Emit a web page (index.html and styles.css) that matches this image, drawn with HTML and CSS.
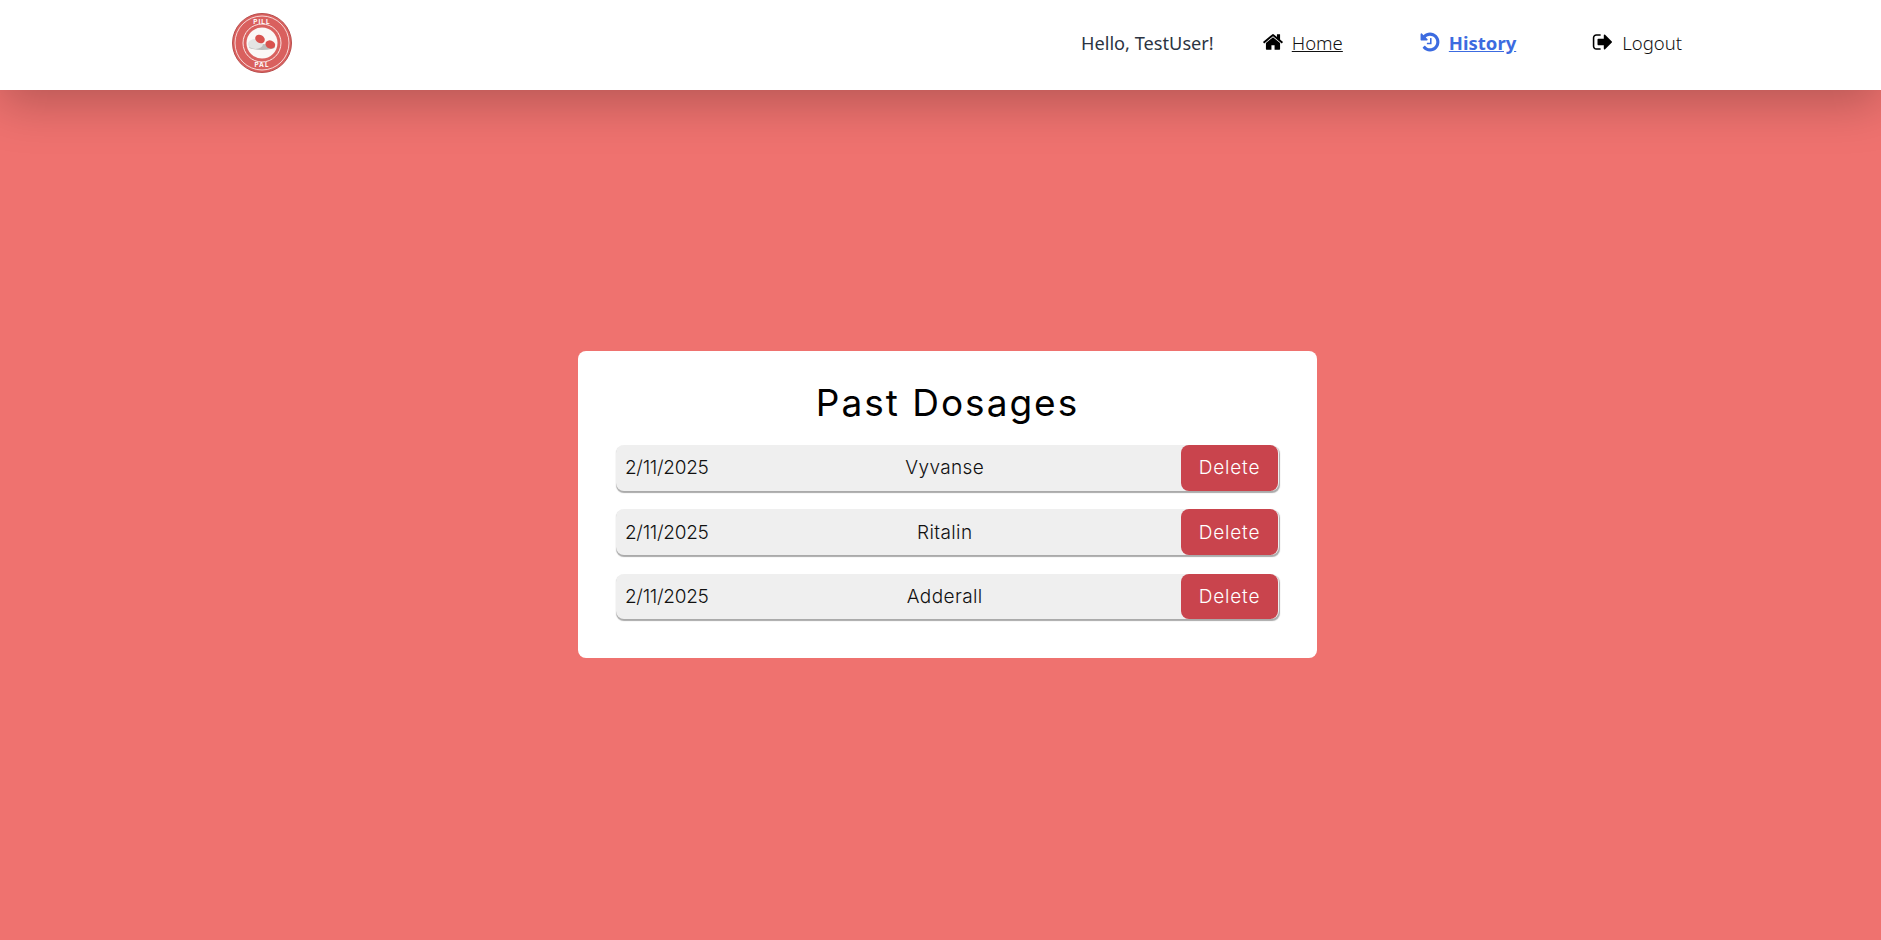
FILE: index.html
```html
<!DOCTYPE html>
<html lang="en">
<head>
    <meta charset="UTF-8">
    <meta name="viewport" content="width=device-width, initial-scale=1.0">
    <title>Pill Pal - History</title>
    <link rel="stylesheet" href="styles.css">
</head>
<body>
    <nav class="navbar">
        <a href="#" class="logo">
            <svg width="62" height="62" viewBox="0 0 62 62">
                <circle cx="31" cy="31" r="29.500" fill="#d9605e" stroke="#b84e4d" stroke-width="1"/>
                <circle cx="31" cy="31" r="27" fill="none" stroke="#fbe6e5" stroke-width="0.900"/>
                <circle cx="31" cy="31" r="19" fill="none" stroke="#fbe6e5" stroke-width="1"/>
                <circle cx="31" cy="31" r="15.500" fill="#fbf7f6"/>
                <text x="31" y="11.500" class="logo-text">PILL</text>
                <text x="31" y="55.300" class="logo-text">PAL</text>
                <ellipse cx="31" cy="35" rx="13" ry="3" fill="#bdbdbd"/>
                <ellipse cx="24.500" cy="32" rx="7.500" ry="5" fill="#e4e4e4"/>
                <ellipse cx="29" cy="27" rx="5" ry="4" fill="#d9524f" transform="rotate(30 29 27)"/>
                <ellipse cx="39.300" cy="32.500" rx="5" ry="4" fill="#d9524f" transform="rotate(20 39.300 32.500)"/>
            </svg>
        </a>
        <ul class="nav-links">
            <li class="greeting">Hello, TestUser!</li>
            <li class="nav-item home">
                <svg class="icon" viewBox="0 0 1792 1792"><path d="M1472 992v480q0 26-19 45t-45 19h-384v-384h-256v384h-384q-26 0-45-19t-19-45v-480q0-1 .5-3t.5-3l575-474 575 474q1 2 1 6zm223-69l-62 74q-8 9-21 11h-3q-13 0-21-7l-692-577-692 577q-12 8-24 7-13-2-21-11l-62-74q-8-10-7-23.500t11-21.500l719-599q32-26 76-26t76 26l244 204v-195q0-14 9-23t23-9h192q14 0 23 9t9 23v408l219 182q10 8 11 21.500t-7 23.500z"/></svg>
                <a href="#">Home</a>
            </li>
            <li class="nav-item active">
                <svg class="icon" viewBox="0 0 1792 1792"><path d="M1664 896q0 156-61 298t-164 245-245 164-298 61q-172 0-327-72.500t-264-204.500q-7-10-6.500-22.500t8.500-20.500l137-138q10-9 25-9 16 2 23 12 73 95 179 147t225 52q104 0 198.500-40.500t163.500-109.500 109.500-163.500 40.500-198.500-40.500-198.500-109.500-163.500-163.500-109.500-198.500-40.500q-98 0-188 35.500t-160 101.500l137 138q31 30 14 69-17 40-59 40h-448q-26 0-45-19t-19-45v-448q0-42 40-59 39-17 69 14l130 129q107-101 244.500-156.500t284.500-55.500q156 0 298 61t245 164 164 245 61 298zm-640-288v448q0 14-9 23t-23 9h-320q-14 0-23-9t-9-23v-64q0-14 9-23t23-9h224v-352q0-14 9-23t23-9h64q14 0 23 9t9 23z"/></svg>
                <a href="#">History</a>
            </li>
            <li class="nav-item logout">
                <svg class="icon" viewBox="0 0 1792 1792"><path d="M704 1440q0 4 1 20t.5 26.500-3 23.500-10 19.500-20.500 6.500h-320q-119 0-203.500-84.500t-84.500-203.500v-704q0-119 84.500-203.500t203.500-84.500h320q13 0 22.500 9.500t9.500 22.500q0 4 1 20t.5 26.500-3 23.500-10 19.500-20.500 6.500h-320q-66 0-113 47t-47 113v704q0 66 47 113t113 47h312l11.500 1 11.500 3 8 5.500 7 9 2 13.500zm928-544q0 26-19 45l-544 544q-19 19-45 19t-45-19-19-45v-288h-448q-26 0-45-19t-19-45v-384q0-26 19-45t45-19h448v-288q0-26 19-45t45-19 45 19l544 544q19 19 19 45z"/></svg>
                <a href="#">Logout</a>
            </li>
        </ul>
    </nav>

    <main class="content">
        <section class="card">
            <h1>Past Dosages</h1>
            <div class="dose-list">
                <div class="dose">
                    <span class="dose-date">2/11/2025</span>
                    <span class="dose-name">Vyvanse</span>
                    <button class="delete-btn">Delete</button>
                </div>
                <div class="dose">
                    <span class="dose-date">2/11/2025</span>
                    <span class="dose-name">Ritalin</span>
                    <button class="delete-btn">Delete</button>
                </div>
                <div class="dose">
                    <span class="dose-date">2/11/2025</span>
                    <span class="dose-name">Adderall</span>
                    <button class="delete-btn">Delete</button>
                </div>
            </div>
        </section>
    </main>
</body>
</html>
```

FILE: styles.css
```css
body {
    font-family: "Noto Sans", "Open Sans", sans-serif;
    margin: 0;
    padding: 0;
    height: 940px;
    overflow: hidden;
    background-color: #ef726f;
}

.navbar {
    position: relative;
    height: 90px;
    background-color: #fff;
    box-shadow: 0 12px 50px rgba(0, 0, 0, 0.25);
    display: flex;
    align-items: center;
    justify-content: space-between;
    padding: 0 199px 0 231px;
}

.logo {
    display: block;
    height: 62px;
    margin-top: -4px;
}

.logo-text {
    font-family: "Inter", sans-serif;
    font-size: 6.500px;
    font-weight: 700;
    letter-spacing: 1px;
    fill: #fff;
    text-anchor: middle;
}

.nav-links {
    list-style: none;
    margin: 0 0 5px;
    padding: 0;
    display: flex;
    align-items: center;
    font-size: 18.500px;
    font-weight: 300;
    color: #111;
}

.greeting {
    color: #2c3442;
    font-size: 18.200px;
    font-weight: 400;
    margin-right: 48px;
}

.nav-item {
    display: flex;
    align-items: center;
    gap: 8px;
    margin-right: 76px;
}

.nav-item:last-child {
    margin-right: 0;
}

.nav-item a {
    color: #111;
    text-decoration: none;
}

.icon {
    width: 22px;
    height: 22px;
    margin-top: -1px;
    fill: #000;
}

.home a {
    text-decoration: underline;
}

.active .icon {
    fill: #3c6be0;
}

.active a {
    color: #3c6be0;
    font-weight: 700;
    text-decoration: underline;
}

.content {
    display: flex;
    justify-content: center;
    padding: 261px 0 0 14px;
}

.card {
    width: 739px;
    box-sizing: border-box;
    padding: 24px 38px 38.400px;
    background-color: #fff;
    border-radius: 8px;
    font-family: "Inter", sans-serif;
}

.card h1 {
    margin: 0 0 15px;
    font-size: 37px;
    line-height: 55px;
    font-weight: 400;
    letter-spacing: 2px;
    text-align: center;
    color: #000;
}

.dose-list {
    display: flex;
    flex-direction: column;
    gap: 18.800px;
}

.dose {
    display: flex;
    align-items: center;
    justify-content: space-between;
    height: 45.600px;
    padding-left: 9px;
    background-color: #efefef;
    border-radius: 8px;
    box-shadow: 0.5px 1.500px 1px #aaa;
    font-size: 19px;
    font-weight: 350;
    color: #111;
}

.dose-date {
    letter-spacing: -0.3px;
}

.dose-name {
    letter-spacing: 0.4px;
}

.delete-btn {
    width: 97px;
    height: 100%;
    margin-right: 1px;
    border: none;
    border-radius: 8px;
    background-color: #c9444d;
    color: #fff;
    font-family: inherit;
    font-size: 19px;
    font-weight: 350;
    letter-spacing: 0.8px;
}
```
